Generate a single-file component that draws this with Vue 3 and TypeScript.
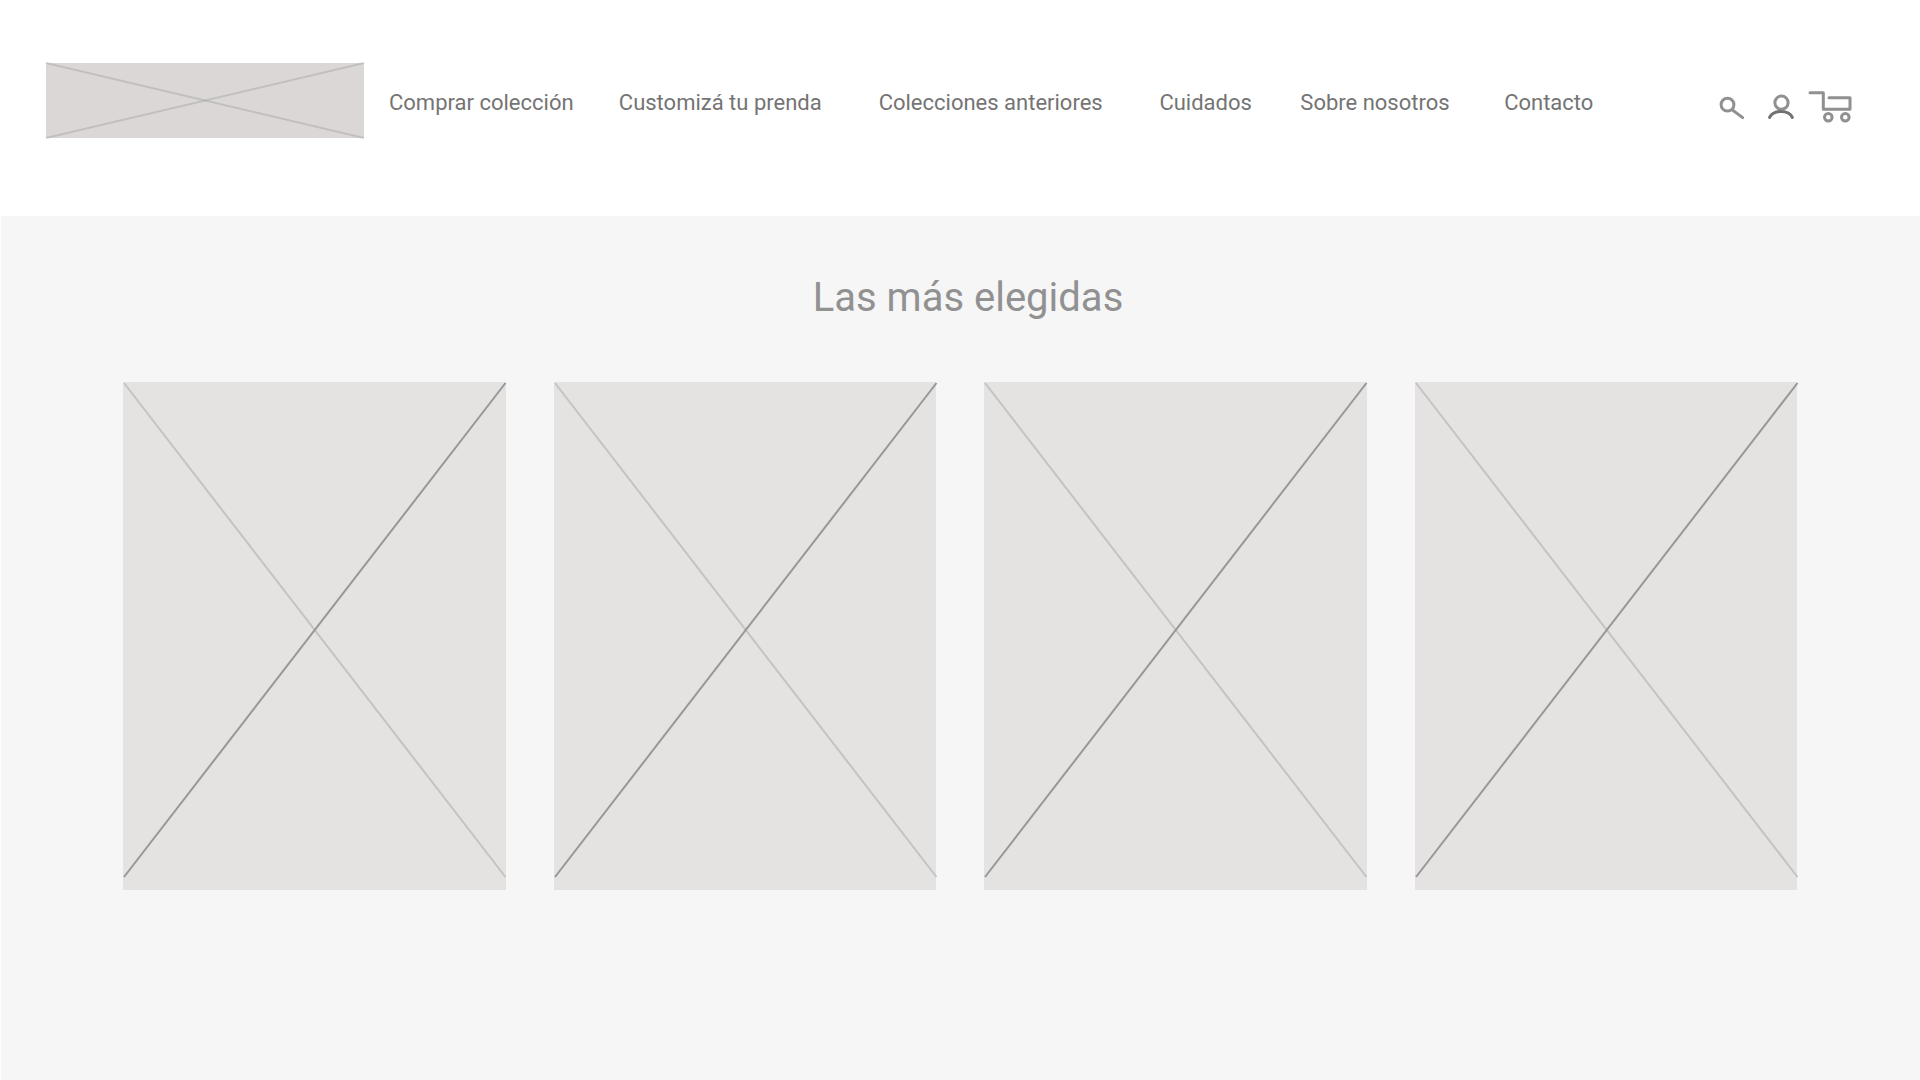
<script setup lang="ts">
interface NavItem {
  label: string
  href: string
}

const navItems: NavItem[] = [
  { label: 'Comprar colección', href: '#comprar' },
  { label: 'Customizá tu prenda', href: '#customiza' },
  { label: 'Colecciones anteriores', href: '#anteriores' },
  { label: 'Cuidados', href: '#cuidados' },
  { label: 'Sobre nosotros', href: '#nosotros' },
  { label: 'Contacto', href: '#contacto' },
]

const products: number[] = [1, 2, 3, 4]
</script>

<template>
  <div class="page">
    <header class="header">
      <a class="logo" href="#inicio" aria-label="Inicio">
        <svg viewBox="0 0 318 75" preserveAspectRatio="none" aria-hidden="true">
          <path d="M0 0 318 75" />
          <path d="M318 0 0 75" />
        </svg>
      </a>
      <nav class="nav">
        <a v-for="item in navItems" :key="item.href" :href="item.href">{{ item.label }}</a>
      </nav>
      <div class="actions">
        <button type="button" aria-label="Buscar">
          <svg width="38" height="36" viewBox="0 0 38 36">
            <circle cx="10.5" cy="16.7" r="6.4" />
            <path d="M15.8 22.3 25.7 29.6" />
          </svg>
        </button>
        <button type="button" aria-label="Cuenta">
          <svg width="28" height="36" viewBox="0 0 28 36">
            <circle cx="14.5" cy="14.7" r="6.6" />
            <path class="shoulders" d="M2.6 29.4C4.5 25 9 23.4 14 23.4S23.4 25 25.3 29.4" />
          </svg>
        </button>
        <button type="button" aria-label="Carrito">
          <svg width="46" height="36" viewBox="0 0 46 36">
            <path d="M3 4.7H16.3V21.3H43V9.7H22" />
            <circle cx="21.3" cy="29.2" r="3.8" />
            <circle cx="38.3" cy="29.2" r="3.8" />
          </svg>
        </button>
      </div>
    </header>

    <main class="featured">
      <h1>Las más elegidas</h1>
      <div class="grid">
        <article v-for="product in products" :key="product" class="card">
          <svg viewBox="0 0 382 495" preserveAspectRatio="none" aria-hidden="true">
            <path class="light" d="M1 1 382 495" />
            <path class="dark" d="M382 1 1 495" />
          </svg>
        </article>
      </div>
    </main>
  </div>
</template>

<style>
body {
  margin: 0;
  background: #fff;
}
</style>

<style scoped>
.page {
  display: flex;
  flex-direction: column;
  min-height: 100vh;
  font-family: Roboto, sans-serif;
}

.header {
  display: flex;
  align-items: flex-start;
  box-sizing: border-box;
  min-height: 216px;
  padding: 63px 67px 0 46px;
}

.logo {
  flex: 0 1 318px;
  height: 75px;
  background: #dbd7d6;
}

.logo svg,
.card svg {
  display: block;
  width: 100%;
  overflow: visible;
  fill: none;
}

.logo svg {
  height: 100%;
  stroke: #a3a5a3;
  stroke-opacity: 0.45;
  stroke-width: 2;
}

.nav {
  display: grid;
  flex: 1;
  grid-template-columns: 230fr 260fr 281fr 141fr 204fr 213fr;
  margin: 27px 0 0 25px;
}

.nav a {
  color: #747474;
  font-size: 22px;
  line-height: 26px;
  text-decoration: none;
  white-space: nowrap;
}

.actions {
  display: flex;
  gap: 12px;
  margin-top: 25px;
}

.actions button {
  padding: 0;
  border: 0;
  background: none;
  cursor: pointer;
}

.actions svg {
  display: block;
  fill: none;
  stroke: #8f9090;
  stroke-width: 3;
  stroke-linecap: round;
  stroke-linejoin: round;
}

.actions .shoulders {
  stroke: #717171;
}

.featured {
  flex: 1;
  margin-left: 1px;
  padding: 58px 123px 48px 122px;
  background: #f6f6f6;
}

h1 {
  margin: 0 0 60px;
  padding-left: 16px;
  color: #919191;
  font-size: 40px;
  font-weight: 400;
  line-height: 48px;
  text-align: center;
}

.grid {
  display: grid;
  grid-template-columns: repeat(4, 1fr);
  gap: 48px;
}

.card {
  height: 508px;
  background: #e4e3e1;
}

.card svg {
  height: 495px;
  stroke-width: 2;
}

.card .light {
  stroke: #c4c3c2;
}

.card .dark {
  stroke: #989797;
}
</style>
